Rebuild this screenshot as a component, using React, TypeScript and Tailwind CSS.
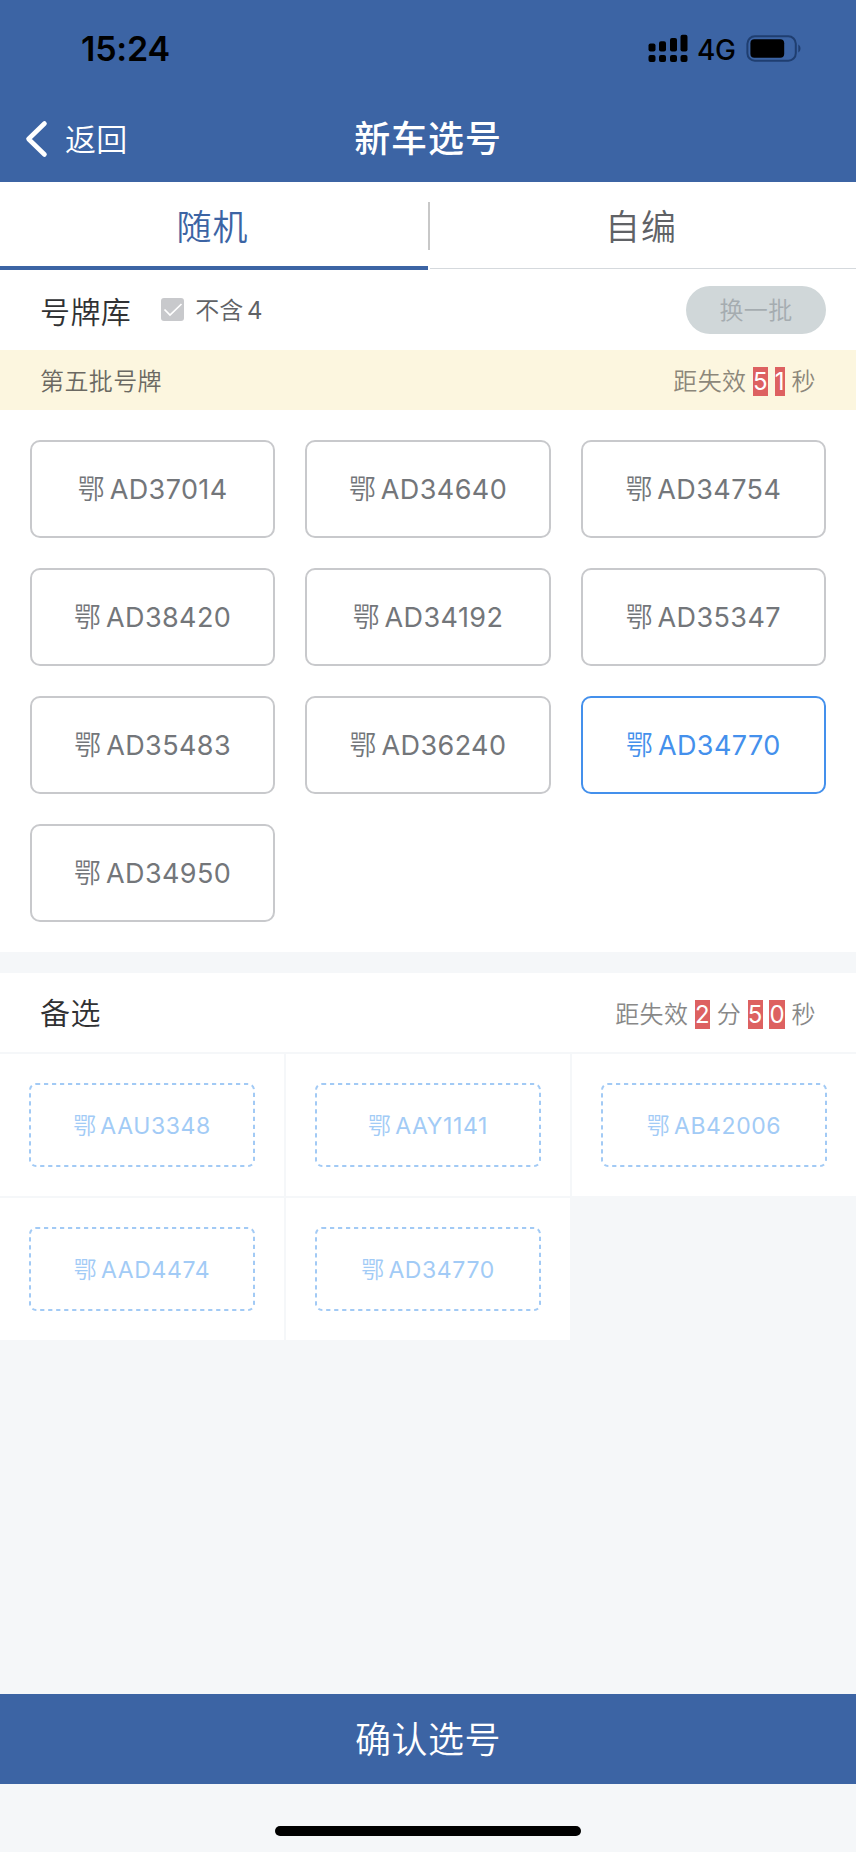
import clsx from "clsx";

const plates = [
  "AD37014",
  "AD34640",
  "AD34754",
  "AD38420",
  "AD34192",
  "AD35347",
  "AD35483",
  "AD36240",
  "AD34770",
  "AD34950",
];

const backups = ["AAU3348", "AAY1141", "AB42006", "AAD4474", "AD34770"];

const selected = "AD34770";

function StatusBar() {
  return (
    <div className="flex h-[96px] items-start justify-between pl-[81px] pr-[54px] pt-[28px]">
      <span className="text-[34px] font-semibold leading-[42px] tracking-[-0.2px] text-black">15:24</span>
      <div className="flex items-center pt-[5px]">
        <svg width="40" height="30" viewBox="0 0 40 30" fill="#000">
          <rect x="0.5" y="9.5" width="7" height="8" rx="2" />
          <rect x="11" y="7.3" width="7" height="10.2" rx="2" />
          <rect x="22" y="4" width="7" height="13.5" rx="2" />
          <rect x="32.5" y="0.7" width="7" height="16.8" rx="2" />
          <rect x="0.5" y="21" width="7" height="7" rx="2" />
          <rect x="11" y="21" width="7" height="7" rx="2" />
          <rect x="22" y="21" width="7" height="7" rx="2" />
          <rect x="32.5" y="21" width="7" height="7" rx="2" />
        </svg>
        <span className="ml-[9px] w-[38px] pt-[2px] text-[28px] font-[450] leading-[30px] tracking-[-0.3px] text-black">4G</span>
        <svg className="ml-[11px]" width="56" height="30" viewBox="0 0 56 30">
          <rect x="1.4" y="2.3" width="48.4" height="24.4" rx="7.5" fill="none" stroke="#1f3e70" strokeWidth="2" />
          <rect x="4.4" y="5.3" width="33.8" height="18.4" rx="4" fill="#000" />
          <path d="M52.3 10.5v8c2.9-1.6 2.9-6.4 0-8z" fill="#1f3e70" />
        </svg>
      </div>
    </div>
  );
}

function NavBar() {
  return (
    <div className="grid h-[86px] grid-cols-3 items-center px-[25px] text-white">
      <div className="flex items-center">
        <svg width="24" height="38" viewBox="0 0 24 38" fill="none" stroke="#fff" strokeWidth="4.6" strokeLinecap="round" strokeLinejoin="round">
          <path d="M19.5 3.5L3.5 19L19.5 34.5" />
        </svg>
        <span className="ml-[16px] pt-[1px] text-[31px] font-[350] leading-[40px] tracking-[0.3px]">返回</span>
      </div>
      <h1 className="whitespace-nowrap pb-[1px] text-center text-[36px] font-medium leading-[44px] tracking-[0.9px]">新车选号</h1>
    </div>
  );
}

function Tabs() {
  return (
    <div className="flex h-[88px] items-start bg-white text-[35px] font-[350] leading-[50px]">
      <div className="flex h-full w-[428px] justify-center border-b-4 border-[#3c64a4] pr-[3px] pt-[20px] tracking-[1px] text-[#3c64a4]">
        随机
      </div>
      <div className="mt-[20px] h-[48px] w-[2px] bg-[#c8c8c8]" />
      <div className="flex h-[87px] flex-1 justify-center border-b border-[#d5d9dd] pr-[4px] pt-[20px] tracking-[1px] text-[#606266]">
        自编
      </div>
    </div>
  );
}

function Digit({ children }: { children: string }) {
  return <span className="bg-[#dd6161] font-normal text-white">{children}</span>;
}

function Plate({ number, active }: { number: string; active?: boolean }) {
  return (
    <button
      className={clsx(
        "flex h-[98px] items-center justify-center rounded-[10px] border-2 bg-white pt-[3px] text-[27px] tracking-[0.4px]",
        active ? "border-[#4490ec] text-[#4490ec]" : "border-[#c8c9cc] text-[#73767a]"
      )}
    >
      <span className="whitespace-pre font-[350] [word-spacing:-3.5px]">鄂 </span>
      <span>{number}</span>
    </button>
  );
}

function Backup({ number }: { number: string }) {
  return (
    <div className="flex h-[142px] items-center bg-white pl-[29px]">
      <div className="relative flex h-[84px] w-[226px] items-center justify-center pt-[2px] text-[23px] tracking-[0.6px] text-[#a2cbf6]">
        <svg className="absolute inset-0" width="226" height="84" fill="none">
          <rect x="1" y="1" width="224" height="82" rx="6" stroke="#a2caf5" strokeWidth="2" strokeDasharray="4.2 3.8" />
        </svg>
        <span className="whitespace-pre font-[350] [word-spacing:-3.5px]">鄂 </span>
        <span>{number}</span>
      </div>
    </div>
  );
}

export default function App() {
  return (
    <div className="flex h-[1852px] w-[856px] flex-col bg-[#f5f7f9] font-['Inter','Noto_Sans_CJK_SC',sans-serif]">
      <header className="bg-[#3c64a4]">
        <StatusBar />
        <NavBar />
      </header>
      <Tabs />

      {/* Plate pool */}
      <section className="h-[682px] bg-white">
        <div className="flex h-[80px] items-center pl-[40px] pr-[30px]">
          <h2 className="pt-[3px] text-[30px] font-[350] leading-[40px] tracking-[0.4px] text-[#303133]">号牌库</h2>
          <svg className="ml-[30px] -mt-[1px]" width="23" height="23" viewBox="0 0 23 23" fill="none">
            <rect width="23" height="23" rx="3" fill="#c8c9cc" />
            <path d="M3.5 11.5L9 17L20.5 6" stroke="#fff" strokeWidth="1.7" />
          </svg>
          <span className="ml-[11px] pt-[2px] text-[24px] font-[350] leading-[32px] text-[#606266] [word-spacing:-3px]">
            不含 <span className="font-normal">4</span>
          </span>
          <button className="ml-auto h-[48px] w-[140px] rounded-full bg-[#d0d7d9] pt-[2px] text-[24px] font-[350] tracking-[0.4px] text-[#a5acb0]">
            换一批
          </button>
        </div>
        <div className="flex h-[60px] items-center justify-between bg-[#fcf6df] px-[40px] pt-[3px] text-[24px] font-[350] leading-[28px] tracking-[0.4px]">
          <span className="text-[#6b6962]">第五批号牌</span>
          <span className="text-[#8c877a] [word-spacing:-0.5px]">
            距失效 <Digit>5</Digit> <Digit>1</Digit> 秒
          </span>
        </div>
        <div className="grid grid-cols-3 gap-x-[30px] gap-y-[30px] px-[30px] pt-[30px]">
          {plates.map((p) => (
            <Plate key={p} number={p} active={p === selected} />
          ))}
        </div>
      </section>

      {/* Backup list */}
      <section className="mt-[21px]">
        <div className="flex h-[79px] items-center justify-between bg-white px-[40px]">
          <h2 className="text-[30px] font-[350] leading-[40px] tracking-[0.4px] text-[#303133]">备选</h2>
          <span className="pt-[4px] text-[24px] font-[350] leading-[28px] tracking-[0.4px] text-[#888] [word-spacing:-0.5px]">
            距失效 <Digit>2</Digit> 分 <Digit>5</Digit> <Digit>0</Digit> 秒
          </span>
        </div>
        <div className="mt-[2px] grid grid-cols-[284px_284px_284px] gap-[2px]">
          {backups.map((p) => (
            <Backup key={p} number={p} />
          ))}
        </div>
      </section>

      <button className="mt-auto h-[90px] shrink-0 bg-[#3c64a4] pt-[2px] text-[36px] font-[350] tracking-[0.5px] text-white">确认选号</button>
      <div className="flex h-[68px] shrink-0 justify-center pt-[42px]">
        <div className="h-[10px] w-[306px] rounded-full bg-black" />
      </div>
    </div>
  );
}
